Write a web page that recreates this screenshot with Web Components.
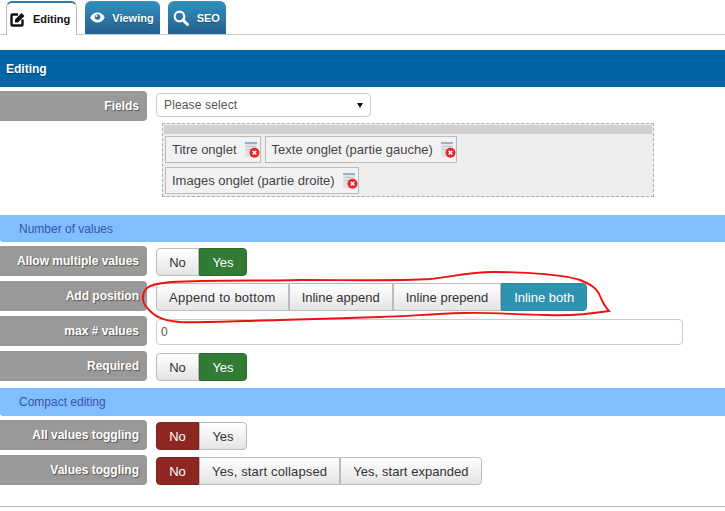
<!DOCTYPE html>
<html>
<head>
<meta charset="utf-8">
<title>Field settings</title>
<style>
    html, body { margin: 0; padding: 0; background: #fff; }
    body { font-family: 'Liberation Sans', Arial, sans-serif; font-size: 13px; color: #333; overflow: hidden; }
</style>
</head>
<body>

<settings-page>
    <tab-bar>
        <tab-item active icon="edit">Editing</tab-item>
        <tab-item icon="eye">Viewing</tab-item>
        <tab-item icon="search">SEO</tab-item>
    </tab-bar>

    <main-heading>Editing</main-heading>

    <form-row label="Fields">
        <fake-select>Please select</fake-select>
    </form-row>
    <field-list>
        <field-chip>Titre onglet</field-chip>
        <field-chip>Texte onglet (partie gauche)</field-chip>
        <field-chip>Images onglet (partie droite)</field-chip>
    </field-list>

    <sub-heading style="margin-top:18px">Number of values</sub-heading>
    <form-row label="Allow multiple values">
        <btn-group><seg-btn>No</seg-btn><seg-btn state="yes" style="min-width:48px">Yes</seg-btn></btn-group>
    </form-row>
    <form-row label="Add position">
        <btn-group>
            <seg-btn style="letter-spacing:.25px">Append to bottom</seg-btn><seg-btn>Inline append</seg-btn><seg-btn>Inline prepend</seg-btn><seg-btn state="info">Inline both</seg-btn>
        </btn-group>
    </form-row>
    <form-row label="max # values">
        <text-box>0</text-box>
    </form-row>
    <form-row label="Required">
        <btn-group><seg-btn>No</seg-btn><seg-btn state="yes" style="min-width:48px">Yes</seg-btn></btn-group>
    </form-row>

    <sub-heading style="margin-top:7px;height:28px">Compact editing</sub-heading>
    <form-row label="All values toggling">
        <btn-group><seg-btn state="no">No</seg-btn><seg-btn style="min-width:48px">Yes</seg-btn></btn-group>
    </form-row>
    <form-row label="Values toggling">
        <btn-group><seg-btn state="no">No</seg-btn><seg-btn style="letter-spacing:.15px">Yes, start collapsed</seg-btn><seg-btn style="letter-spacing:.05px">Yes, start expanded</seg-btn></btn-group>
    </form-row>

    <page-rule></page-rule>

    <!-- hand drawn circle lies over the form -->
    <svg class="scribble" slot="overlay" width="480" height="65" viewBox="140 265 480 65" fill="none" stroke="#ee1111" stroke-width="1.9">
        <path d="M147 288C152 284 160 283 172 282C210 280 260 281 300 280C350 280 400 281 430 279C450 277 470 272 493 272C530 272 565 275 580 280C590 284 597 288 600 296C603 303 604 306 609 311C590 314 570 316 547 315C520 315 490 312 463 313C430 314 410 316 380 317C345 318 320 319 280 320C240 321 200 323 180 322C168 321 158 319 150 311C145 306 142 302 143 297C143 293 145 290 147 288"/>
    </svg>
</settings-page>

<script>
const ICONS = {
    edit: `<svg width="15" height="15" viewBox="0 0 15 15"><path d="M8 2.500H2.500a1 1 0 0 0-1 1v9a1 1 0 0 0 1 1h9a1 1 0 0 0 1-1V7.500" fill="none" stroke="#111" stroke-width="2.400"/><path d="M5 7.500 11.500 1 14.500 4 8 10.500H5Z" fill="#111"/></svg>`,
    eye: `<svg width="15" height="11" viewBox="0 0 15 11"><path d="M.2 5.500C2 2 4.500.5 7.500.5s5.500 1.500 7.300 5c-1.800 3.500-4.300 5-7.300 5S2 9 .2 5.500Z" fill="#fff"/><circle cx="7.500" cy="5" r="2.800" fill="#2a6f9f"/><circle cx="6.500" cy="4" r="1.100" fill="#fff"/></svg>`,
    search: `<svg width="16" height="16" viewBox="0 0 16 16"><circle cx="6.500" cy="6.500" r="4.800" fill="none" stroke="#fff" stroke-width="2.200"/><path d="M10 10l4.500 4.500" stroke="#fff" stroke-width="3" stroke-linecap="round"/></svg>`
};

class SettingsPage extends HTMLElement {
    constructor() {
        super();
        this.attachShadow({mode: 'open'});
        this.shadowRoot.innerHTML = `
<style>
    :host { display: block; position: relative; width: 725px; height: 511px; }
    ::slotted(.scribble) { position: absolute; left: 140px; top: 265px; }
</style>
<slot></slot>
<slot name="overlay"></slot>`;
    }
}

class TabBar extends HTMLElement {
    constructor() {
        super();
        this.attachShadow({mode: 'open'});
        this.shadowRoot.innerHTML = `
<style>
    :host { display: flex; gap: 8px; box-sizing: content-box; height: 33px; padding: 1px 0 0 6px; border-bottom: 1px solid #c8c8c8; margin-bottom: 15px; }
</style>
<slot></slot>`;
    }
}

class TabItem extends HTMLElement {
    constructor() {
        super();
        this.attachShadow({mode: 'open'});
        this.shadowRoot.innerHTML = `
<style>
    :host { display: flex; align-items: center; box-sizing: border-box; height: 33px; padding: 0 6px 0 5px; gap: 8px; font: bold 11px 'Liberation Sans', Arial, sans-serif; color: #fff; text-shadow: 0 1px 1px rgba(0,0,0,.4); border-radius: 6px 6px 0 0; background: linear-gradient(#3290bf, #24618f); }
    :host([icon=eye]) { gap: 7px; }
    :host([active]) { color: #111; text-shadow: none; height: 34px; padding: 0 6px 0 3px; background: #fff; border: 1px solid #bbb; border-top: 2px solid #2d7ba6; border-bottom: 0; }
    .icon { display: flex; }
</style>
<span class="icon">${ICONS[this.getAttribute('icon')]}</span><slot></slot>`;
    }
}

class MainHeading extends HTMLElement {
    constructor() {
        super();
        this.attachShadow({mode: 'open'});
        this.shadowRoot.innerHTML = `
<style>
    :host { display: flex; align-items: center; height: 37px; padding-left: 6px; margin-bottom: 4px; background: #0066a6; color: #fff; font-weight: bold; font-size: 12px; text-shadow: 0 1px 1px rgba(0,0,0,.4); }
</style>
<slot></slot>`;
    }
}

class SubHeading extends HTMLElement {
    constructor() {
        super();
        this.attachShadow({mode: 'open'});
        this.shadowRoot.innerHTML = `
<style>
    :host { display: flex; align-items: center; height: 27px; padding-left: 19px; margin-bottom: 4px; background: #7fbfff; color: #3f51a8; font-size: 12px; border-radius: 0 0 0 3px; }
</style>
<slot></slot>`;
    }
}

class FormRow extends HTMLElement {
    constructor() {
        super();
        this.attachShadow({mode: 'open'});
        this.shadowRoot.innerHTML = `
<style>
    :host { display: flex; gap: 9px; height: 30px; margin-bottom: 5px; }
    .label { box-sizing: border-box; width: 147px; flex: none; display: flex; align-items: center; justify-content: flex-end; padding-right: 8px; background: #999; border-radius: 0 4px 4px 0; color: #fff; font-weight: bold; font-size: 12px; text-shadow: 1px 1px 1px rgba(0,0,0,.45); }
    .control { display: flex; align-items: center; flex: 1; }
</style>
<div class="label"></div>
<div class="control"><slot></slot></div>`;
        this.shadowRoot.querySelector('.label').textContent = this.getAttribute('label');
    }
}

class FakeSelect extends HTMLElement {
    constructor() {
        super();
        this.attachShadow({mode: 'open'});
        this.shadowRoot.innerHTML = `
<style>
    :host { display: flex; align-items: center; justify-content: space-between; box-sizing: border-box; width: 215px; height: 24px; margin-top: -2px; padding: 0 7px; border: 1px solid #ccc; border-radius: 4px; font-size: 12px; letter-spacing: .15px; color: #555; background: #fff; }
    .arrow { width: 0; height: 0; border: 3px solid transparent; border-top: 5px solid #111; border-bottom: 0; }
</style>
<slot></slot><span class="arrow"></span>`;
    }
}

class FieldList extends HTMLElement {
    constructor() {
        super();
        this.attachShadow({mode: 'open'});
        this.shadowRoot.innerHTML = `
<style>
    :host { display: block; box-sizing: border-box; width: 492px; height: 74px; margin: -3px 0 0 162px; padding: 1px; border: 1px dashed #adadad; background: #eee; }
    .handle { height: 9px; background: #d0d0d0; }
    .items { display: flex; flex-wrap: wrap; gap: 4px; padding: 2px 1px; }
</style>
<div class="handle"></div>
<div class="items"><slot></slot></div>`;
    }
}

class FieldChip extends HTMLElement {
    constructor() {
        super();
        this.attachShadow({mode: 'open'});
        this.shadowRoot.innerHTML = `
<style>
    :host { display: flex; align-items: center; box-sizing: border-box; height: 27px; padding: 0 0 0 6px; gap: 8px; border: 1px solid #bbb; background: #f2f2f2; font-size: 13px; color: #444; }
    svg { margin-top: 1px; }
</style>
<slot></slot>
<svg width="15" height="16" viewBox="0 0 15 16">
    <rect x="0" y="0" width="12" height="15" fill="#dfe3e6"/>
    <rect x="0" y="0" width="12" height="2" fill="#8fb2cf"/>
    <rect x="1.500" y="4" width="9" height="1" fill="#c4c4c4"/>
    <rect x="1.500" y="7" width="5" height="1" fill="#c4c4c4"/>
    <circle cx="9.500" cy="10.700" r="5" fill="#e5252a"/>
    <path d="M7.700 8.900l3.600 3.600M11.300 8.900l-3.600 3.600" stroke="#fff" stroke-width="1.500"/>
</svg>`;
    }
}

class BtnGroup extends HTMLElement {
    constructor() {
        super();
        this.attachShadow({mode: 'open'});
        this.shadowRoot.innerHTML = `
<style>
    :host { display: inline-flex; height: 28px; margin-top: 2px; }
    ::slotted(:first-child) { border-radius: 4px 0 0 4px; }
    ::slotted(:last-child) { border-radius: 0 4px 4px 0; }
</style>
<slot></slot>`;
    }
}

class SegBtn extends HTMLElement {
    constructor() {
        super();
        this.attachShadow({mode: 'open'});
        this.shadowRoot.innerHTML = `
<style>
    :host { display: flex; align-items: center; justify-content: center; box-sizing: border-box; min-width: 43px; padding: 0 12px; font-size: 13px; color: #333; background: linear-gradient(#fff, #e4e4e4); border: 1px solid #bbb; }
    :host([state=yes]) { background: #317b34; border-color: #2b6d2e; color: #fff; }
    :host([state=no]) { background: #8e2722; border-color: #7d221e; color: #fff; }
    :host([state=info]) { background: #2e93b0; border-color: #2b87a1; color: #fff; }
</style>
<slot></slot>`;
    }
}

class TextBox extends HTMLElement {
    constructor() {
        super();
        this.attachShadow({mode: 'open'});
        this.shadowRoot.innerHTML = `
<style>
    :host { display: flex; align-items: center; box-sizing: border-box; width: 527px; height: 26px; margin-top: 1px; padding-left: 4px; border: 1px solid #ccc; border-radius: 4px; font-size: 12px; color: #555; background: #fff; }
</style>
<slot></slot>`;
    }
}

class PageRule extends HTMLElement {
    constructor() {
        super();
        this.attachShadow({mode: 'open'});
        this.shadowRoot.innerHTML = `
<style>
    :host { display: block; height: 1px; margin-top: 21px; background: #b5b5b5; }
</style>`;
    }
}

customElements.define('settings-page', SettingsPage);
customElements.define('tab-bar', TabBar);
customElements.define('tab-item', TabItem);
customElements.define('main-heading', MainHeading);
customElements.define('sub-heading', SubHeading);
customElements.define('form-row', FormRow);
customElements.define('fake-select', FakeSelect);
customElements.define('field-list', FieldList);
customElements.define('field-chip', FieldChip);
customElements.define('btn-group', BtnGroup);
customElements.define('seg-btn', SegBtn);
customElements.define('text-box', TextBox);
customElements.define('page-rule', PageRule);
</script>
</body>
</html>
